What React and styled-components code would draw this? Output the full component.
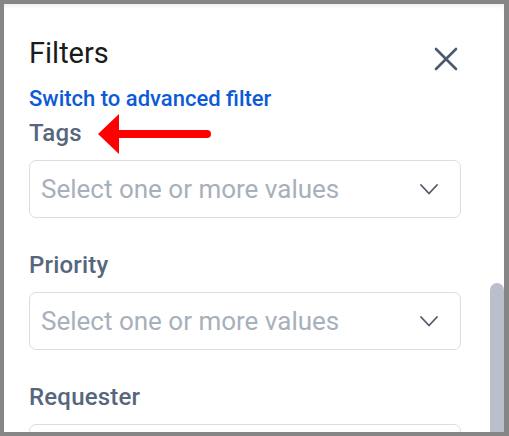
import React from "react";
import styled, { createGlobalStyle } from "styled-components";

const GlobalStyle = createGlobalStyle`
  html, body {
    margin: 0;
    padding: 0;
    background: #858585;
  }
  * {
    box-sizing: border-box;
  }
`;

const fields = [
  { label: "Tags", arrow: true },
  { label: "Priority" },
  { label: "Requester" },
];

const Frame = styled.div`
  width: 509px;
  height: 436px;
  border-style: solid;
  border-color: #868686;
  border-width: 4px 5px 4px 4px;
  background: #fff;
  overflow: hidden;
  position: relative;
`;

const Panel = styled.div`
  height: 100%;
  padding: 32px 43px 0 25px;
  box-shadow: inset 0 4px 4px -2px rgba(0, 0, 0, 0.07);
  font-family: Roboto, "Liberation Sans", sans-serif;
`;

const Header = styled.div`
  display: flex;
  justify-content: space-between;
  align-items: flex-start;
`;

const Title = styled.h2`
  margin: 0;
  font-size: 29px;
  line-height: 34px;
  font-weight: 400;
  color: #1b1b1b;
`;

const CloseButton = styled.button`
  border: 0;
  padding: 0;
  background: none;
  width: 24px;
  height: 24px;
  margin: 11px 3px 0 0;
  display: flex;
  align-items: center;
  justify-content: center;
  cursor: pointer;
`;

const SwitchLink = styled.a`
  display: block;
  margin-top: 15px;
  font-size: 22px;
  line-height: 26px;
  font-weight: 500;
  color: #0b5bd8;
  text-decoration: none;
`;

const Fields = styled.div`
  margin-top: 7px;
  display: flex;
  flex-direction: column;
  gap: 33px;
`;

const Field = styled.div`
  display: flex;
  flex-direction: column;
  gap: 13px;
`;

const LabelRow = styled.div`
  position: relative;
  height: 28px;
`;

const Label = styled.label`
  font-size: 24px;
  line-height: 28px;
  font-weight: 500;
  letter-spacing: 0.2px;
  color: #56667c;
`;

const Arrow = styled.svg`
  position: absolute;
  left: 69px;
  top: -6px;
`;

const Select = styled.div`
  height: 58px;
  border: 1.5px solid #d8dde7;
  border-radius: 7px;
  display: flex;
  align-items: center;
  justify-content: space-between;
  padding: 0 22px 0 11px;
`;

const Placeholder = styled.span`
  font-size: 26px;
  color: #a7b0bb;
  white-space: nowrap;
`;

const ScrollThumb = styled.div`
  position: absolute;
  right: 0;
  top: 279px;
  bottom: 0;
  width: 14px;
  background: #b9c0cc;
  border-radius: 7px 7px 0 0;
`;

const CloseIcon = () => (
  <svg width="24" height="24" viewBox="0 0 24 24">
    <path
      d="M2 2 L22 22 M22 2 L2 22"
      stroke="#4a5a6f"
      strokeWidth="2.6"
      strokeLinecap="round"
      fill="none"
    />
  </svg>
);

const Chevron = () => (
  <svg width="18" height="11" viewBox="0 0 18 11">
    <path
      d="M1 1 L9 9.5 L17 1"
      stroke="#4f5a69"
      strokeWidth="1.8"
      strokeLinecap="round"
      strokeLinejoin="round"
      fill="none"
    />
  </svg>
);

const RedArrow = () => (
  <Arrow width="114" height="44" viewBox="0 0 114 44">
    <polygon points="0,21 21,1 21,41" fill="#ff0000" />
    <line
      x1="18"
      y1="21"
      x2="109"
      y2="21"
      stroke="#ff0000"
      strokeWidth="8"
      strokeLinecap="round"
    />
  </Arrow>
);

const App = () => {
  return (
    <>
      <GlobalStyle />
      <Frame>
        <Panel>
          <Header>
            <Title>Filters</Title>
            <CloseButton aria-label="Close">
              <CloseIcon />
            </CloseButton>
          </Header>
          <SwitchLink href="#">Switch to advanced filter</SwitchLink>
          <Fields>
            {fields.map((f) => (
              <Field key={f.label}>
                <LabelRow>
                  <Label>{f.label}</Label>
                  {f.arrow && <RedArrow />}
                </LabelRow>
                <Select>
                  <Placeholder>Select one or more values</Placeholder>
                  <Chevron />
                </Select>
              </Field>
            ))}
          </Fields>
        </Panel>
        <ScrollThumb />
      </Frame>
    </>
  );
};

export default App;
